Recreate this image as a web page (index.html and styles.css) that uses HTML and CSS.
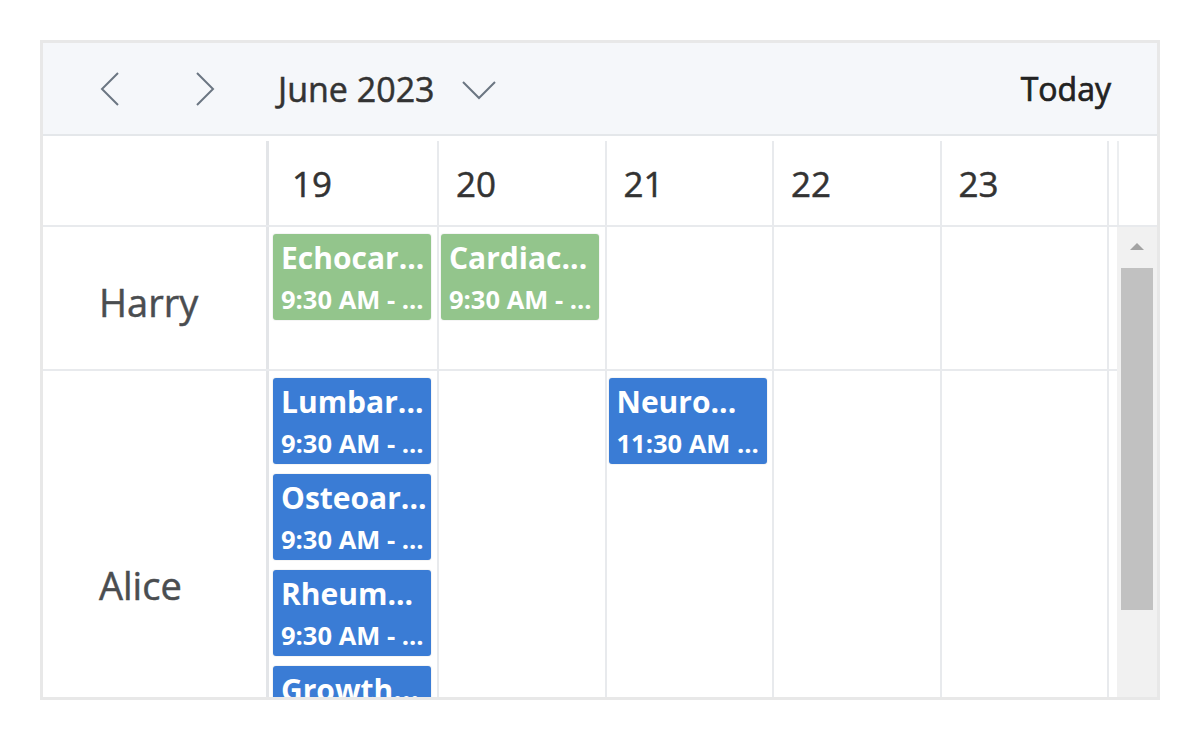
FILE: index.html
```html
<!DOCTYPE html>
<html lang="en">
<head>
<meta charset="utf-8">
<title>Scheduler</title>
<link rel="stylesheet" href="styles.css">
</head>
<body>
<div class="scheduler">
  <div class="toolbar">
    <button class="nav prev" aria-label="Previous">
      <svg width="24" height="36" viewBox="0 0 24 36"><path d="M20 2 L4 18 L20 34" fill="none" stroke="#6b7682" stroke-width="2"/></svg>
    </button>
    <button class="nav next" aria-label="Next">
      <svg width="24" height="36" viewBox="0 0 24 36"><path d="M4 2 L20 18 L4 34" fill="none" stroke="#6b7682" stroke-width="2"/></svg>
    </button>
    <div class="month">June 2023</div>
    <svg class="caret" width="36" height="20" viewBox="0 0 36 20"><path d="M2 2 L18 18 L34 2" fill="none" stroke="#6b7682" stroke-width="2"/></svg>
    <div class="spacer"></div>
    <div class="today">Today</div>
  </div>

  <div class="date-header">
    <div class="corner"></div>
    <div class="day first">19</div>
    <div class="day">20</div>
    <div class="day">21</div>
    <div class="day">22</div>
    <div class="day">23</div>
    <div class="gutter"></div>
    <div class="scroll-head"></div>
  </div>

  <div class="body">
    <div class="rows">
      <div class="row harry">
        <div class="name">Harry</div>
        <div class="cell first">
          <div class="event green"><div class="title">Echocar...</div><div class="time">9:30 AM - ...</div></div>
        </div>
        <div class="cell">
          <div class="event green"><div class="title">Cardiac...</div><div class="time">9:30 AM - ...</div></div>
        </div>
        <div class="cell"></div>
        <div class="cell"></div>
        <div class="cell"></div>
        <div class="gutter"></div>
      </div>
      <div class="row alice">
        <div class="name">Alice</div>
        <div class="cell first">
          <div class="event blue"><div class="title">Lumbar...</div><div class="time">9:30 AM - ...</div></div>
          <div class="event blue"><div class="title">Osteoar...</div><div class="time">9:30 AM - ...</div></div>
          <div class="event blue"><div class="title">Rheum...</div><div class="time">9:30 AM - ...</div></div>
          <div class="event blue"><div class="title">Growth...</div><div class="time">9:30 AM - ...</div></div>
        </div>
        <div class="cell"></div>
        <div class="cell">
          <div class="event blue"><div class="title">Neuro...</div><div class="time">11:30 AM ...</div></div>
        </div>
        <div class="cell"></div>
        <div class="cell"></div>
        <div class="gutter"></div>
      </div>
    </div>
    <div class="scrollbar">
      <div class="arrow-up"></div>
      <div class="thumb"></div>
    </div>
  </div>
</div>
</body>
</html>
```

FILE: styles.css
```css
* { box-sizing: border-box; }

html, body {
  margin: 0;
  padding: 0;
  background: #ffffff;
}

body {
  font-family: "Open Sans", "Noto Sans", sans-serif;
  color: #333333;
}

.scheduler {
  margin: 40px;
  width: 1120px;
  height: 660px;
  border: 3px solid #e8e8e8;
  display: flex;
  flex-direction: column;
  overflow: hidden;
}

/* Toolbar */
.toolbar {
  height: 93px;
  flex: none;
  background: #f5f7fa;
  border-bottom: 2px solid #e4e7ea;
  display: flex;
  align-items: center;
  padding: 0 46px 0 47px;
}

.nav {
  width: 40px;
  height: 40px;
  padding: 0;
  border: none;
  background: transparent;
  display: flex;
  align-items: center;
  justify-content: center;
}

.nav.next { margin-left: 55px; }

.month {
  margin-left: 53px;
  font-size: 34px;
  color: #333333;
  -webkit-text-stroke: 0.5px #333333;
  line-height: 1;
}

.caret {
  margin-left: 26px;
  margin-top: 2px;
}

.spacer { flex: 1; }

.today {
  font-size: 32px;
  color: #222222;
  -webkit-text-stroke: 0.7px #222222;
  line-height: 1;
}

/* Date header */
.date-header {
  flex: none;
  display: flex;
  padding-top: 5px;
  border-bottom: 2px solid #e8eaed;
  background: #ffffff;
}

.corner {
  width: 223px;
  height: 84px;
}

.day {
  width: 167.5px;
  height: 84px;
  border-left: 2px solid #e8eaed;
  display: flex;
  align-items: center;
  padding-left: 17px;
  font-size: 35px;
  color: #333333;
  -webkit-text-stroke: 0.5px #333333;
}

.day.first {
  width: 171px;
  border-left: 3px solid #e3e5e8;
  padding-left: 23px;
}

.date-header .gutter {
  width: 10px;
  border-left: 2px solid #e8eaed;
}

.scroll-head {
  width: 40px;
  border-left: 2px solid #eceef0;
}

/* Body */
.body {
  flex: 1;
  display: flex;
  min-height: 0;
  overflow: hidden;
}

.rows {
  width: 1074px;
  flex: none;
}

.row {
  display: flex;
  border-bottom: 2px solid #e8eaed;
}

.row.harry { height: 144px; }
.row.alice { height: 434px; }

.name {
  width: 223px;
  display: flex;
  align-items: center;
  padding-left: 56px;
  font-size: 38px;
  color: #4a4d50;
  -webkit-text-stroke: 0.5px #4a4d50;
}

.row.harry .name { padding-top: 8px; }
.row.alice .name { padding-bottom: 4px; }

.cell {
  width: 167.5px;
  border-left: 2px solid #e8eaed;
  padding: 7px 0 0 2px;
  display: flex;
  flex-direction: column;
  gap: 10px;
}

.cell.first {
  width: 171px;
  border-left: 3px solid #e3e5e8;
  padding-left: 4px;
}

.row .gutter {
  width: 10px;
  border-left: 2px solid #e8eaed;
}

.event {
  width: 158px;
  height: 86px;
  flex: none;
  border-radius: 3px;
  padding: 6px 0 0 8px;
  color: #ffffff;
  font-weight: 700;
  white-space: nowrap;
  overflow: hidden;
  box-shadow: 0 0 0 1px rgba(0, 0, 0, 0.04);
}

.event.green { background: #93c58c; }
.event.blue { background: #3a7cd5; }

.title {
  font-size: 30px;
  line-height: 36px;
}

.time {
  font-size: 25.5px;
  line-height: 30px;
  margin-top: 8px;
}

/* Scrollbar */
.scrollbar {
  width: 40px;
  flex: none;
  background: #f1f1f1;
  display: flex;
  flex-direction: column;
  align-items: center;
  padding-top: 16px;
}

.arrow-up {
  width: 0;
  height: 0;
  border-left: 7px solid transparent;
  border-right: 7px solid transparent;
  border-bottom: 7px solid #a3a3a3;
}

.thumb {
  margin-top: 18px;
  width: 32px;
  height: 342px;
  background: #c1c1c1;
}
```
